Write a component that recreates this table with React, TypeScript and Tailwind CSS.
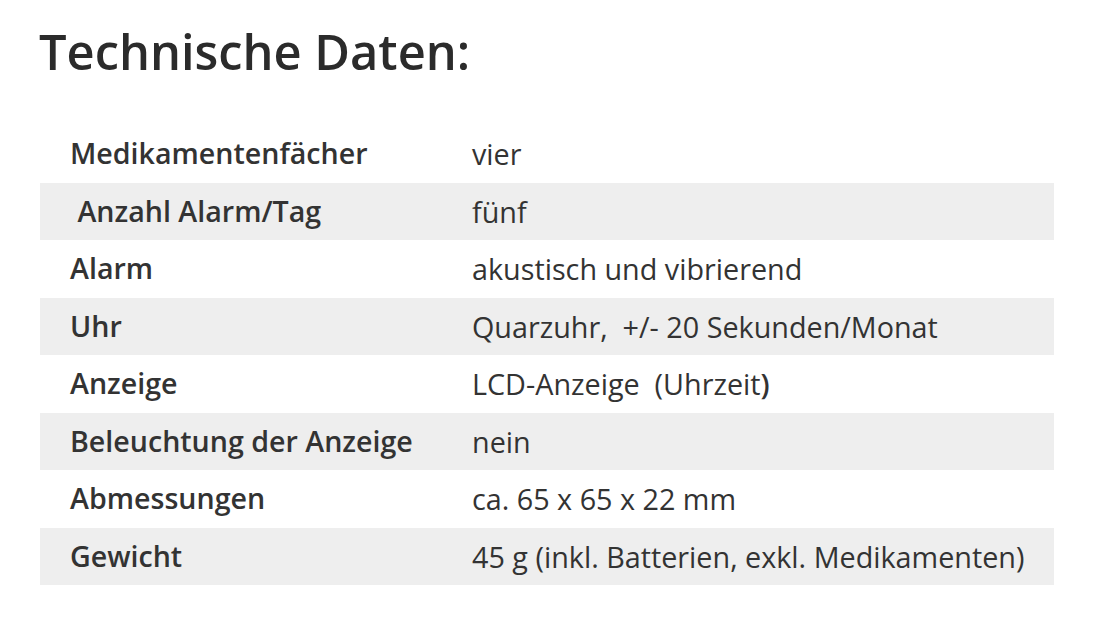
import React from "react";

const rows: [string, React.ReactNode][] = [
  ["Medikamentenfächer", "vier"],
  ["\u00a0Anzahl Alarm/Tag", "fünf"],
  ["Alarm", "akustisch und vibrierend"],
  ["Uhr", "Quarzuhr,\u00a0 +/- 20 Sekunden/Monat"],
  ["Anzeige", <>LCD-Anzeige&nbsp; (Uhrzeit<span className="font-semibold">)</span></>],
  ["Beleuchtung der Anzeige", "nein"],
  ["Abmessungen", "ca. 65 x 65 x 22 mm"],
  ["Gewicht", "45 g (inkl. Batterien, exkl. Medikamenten)"],
];

export default function App() {
  return (
    <div
      className="w-[1100px] h-[642px] bg-white text-[#333333] overflow-hidden"
      style={{ fontFamily: '"Open Sans", sans-serif' }}
    >
      <div className="pl-[39px] pt-[21px]">
        <h1 className="text-[48.8px] font-semibold leading-[60px] text-[#2b2b2b] whitespace-nowrap">Technische Daten:</h1>
      </div>
      <div className="ml-[40px] mt-[44px] w-[1014px] flex flex-col">
        {rows.map(([k, v], i) => (
          <div
            key={i}
            className={`flex items-center h-[57.5px] ${i % 2 === 1 ? "bg-[#eeeeee]" : "bg-white"}`}
          >
            <div className="w-[432px] pl-[30px] text-[28.6px] font-semibold whitespace-pre">{k}</div>
            <div className="flex-1 text-[28.75px] whitespace-pre">{v}</div>
          </div>
        ))}
      </div>
    </div>
  );
}
